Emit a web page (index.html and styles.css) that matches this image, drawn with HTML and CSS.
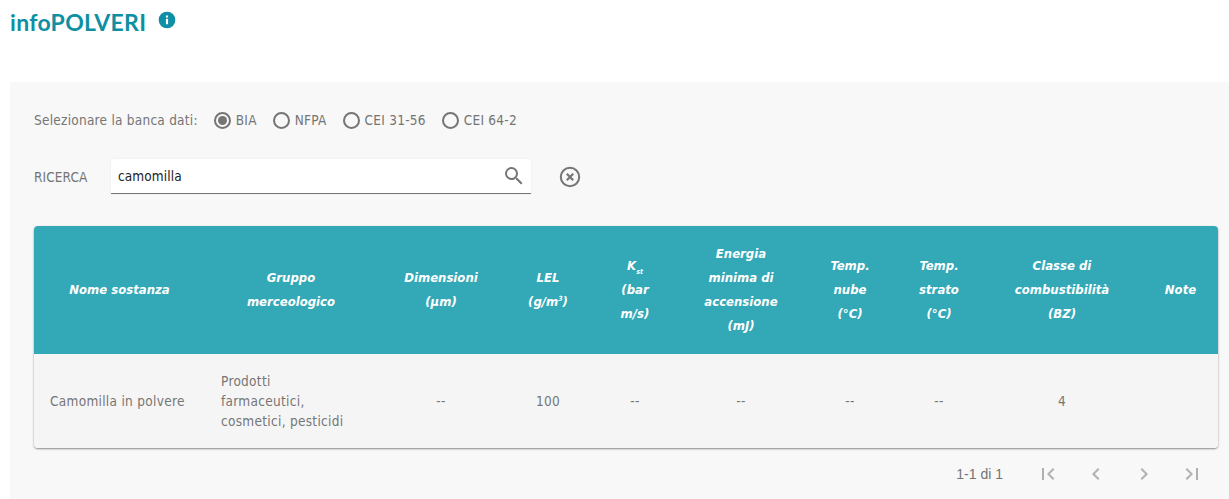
FILE: index.html
```html
<!DOCTYPE html>
<html lang="it">
<head>
<meta charset="utf-8">
<title>infoPOLVERI</title>
<link rel="stylesheet" href="styles.css">
</head>
<body>
<header class="title-bar">
  <h1 class="title">infoPOLVERI</h1>
  <svg class="info-icon" viewBox="0 0 24 24" width="20" height="20"><path fill="#0e8fa3" d="M12 2a10 10 0 1 0 0 20 10 10 0 0 0 0-20zm1.3 15h-2.6v-6.5h2.6zm0-8h-2.6V6.7h2.6z"/></svg>
</header>
<main class="panel">
  <div class="db-row">
    <span class="db-label">Selezionare la banca dati:</span>
    <label class="radio"><span class="radio-dot checked"></span>BIA</label>
    <label class="radio"><span class="radio-dot"></span>NFPA</label>
    <label class="radio"><span class="radio-dot"></span>CEI 31-56</label>
    <label class="radio"><span class="radio-dot"></span>CEI 64-2</label>
  </div>
  <div class="search-row">
    <span class="search-label">RICERCA</span>
    <div class="search-box">
      <span class="search-text">camomilla</span>
      <svg viewBox="0 0 24 24" width="24" height="24"><path fill="#757575" d="M15.5 14h-.79l-.28-.27A6.47 6.47 0 0 0 16 9.5 6.5 6.5 0 1 0 9.5 16c1.61 0 3.09-.59 4.23-1.57l.27.28v.79l5 4.99L20.49 19l-4.99-5zm-6 0C7.01 14 5 11.99 5 9.5S7.01 5 9.5 5 14 7.01 14 9.5 11.99 14 9.5 14z"/></svg>
    </div>
    <svg class="clear-icon" viewBox="0 0 24 24" width="24" height="24"><circle cx="12" cy="12" r="9.2" fill="none" stroke="#757575" stroke-width="2"/><path d="M8.8 8.8l6.4 6.4M15.2 8.8l-6.4 6.4" stroke="#757575" stroke-width="2.2" fill="none"/></svg>
  </div>
  <div class="table-card">
    <table class="data-table">
      <colgroup>
        <col class="c1"><col class="c2"><col class="c3"><col class="c4"><col class="c5"><col class="c6"><col class="c7"><col class="c8"><col class="c9"><col class="c10">
      </colgroup>
      <thead>
        <tr>
          <th>Nome sostanza</th>
          <th>Gruppo<br>merceologico</th>
          <th>Dimensioni<br>(µm)</th>
          <th>LEL<br>(g/m<sup>3</sup>)</th>
          <th>K<sub>st</sub><br>(bar<br>m/s)</th>
          <th>Energia<br>minima di<br>accensione<br>(mJ)</th>
          <th>Temp.<br>nube<br>(°C)</th>
          <th>Temp.<br>strato<br>(°C)</th>
          <th>Classe di<br>combustibilità<br>(BZ)</th>
          <th>Note</th>
        </tr>
      </thead>
      <tbody>
        <tr>
          <td class="left">Camomilla in polvere</td>
          <td class="left">Prodotti<br>farmaceutici,<br>cosmetici, pesticidi</td>
          <td>--</td>
          <td>100</td>
          <td>--</td>
          <td>--</td>
          <td>--</td>
          <td>--</td>
          <td>4</td>
          <td></td>
        </tr>
      </tbody>
    </table>
  </div>
  <nav class="pager">
    <span class="pager-text">1-1 di 1</span>
    <svg viewBox="0 0 24 24" width="24" height="24"><path fill="#b0b0b0" d="M18.41 16.59L13.82 12l4.59-4.59L17 6l-6 6 6 6zM6 6h2v12H6z"/></svg>
    <svg viewBox="0 0 24 24" width="24" height="24"><path fill="#b0b0b0" d="M15.41 7.41L14 6l-6 6 6 6 1.41-1.41L10.83 12z"/></svg>
    <svg viewBox="0 0 24 24" width="24" height="24"><path fill="#b0b0b0" d="M10 6L8.59 7.41 13.17 12l-4.58 4.59L10 18l6-6z"/></svg>
    <svg viewBox="0 0 24 24" width="24" height="24"><path fill="#b0b0b0" d="M5.59 7.41L10.18 12l-4.59 4.59L7 18l6-6-6-6zM16 6h2v12h-2z"/></svg>
  </nav>
</main>
</body>
</html>
```
FILE: styles.css
```css
* { box-sizing: border-box; }
html, body { margin: 0; padding: 0; }
body {
  width: 1229px;
  height: 499px;
  overflow: hidden;
  background: #fff;
  font-family: "DejaVu Sans", Verdana, sans-serif;
  font-stretch: condensed;
  color: #757575;
}
.title-bar {
  height: 82px;
  padding: 8px 0 0 10px;
  display: flex;
  align-items: flex-start;
  gap: 11px;
}
.title {
  margin: 0;
  font-family: Lato, sans-serif;
  font-size: 23px;
  line-height: 28px;
  font-weight: 700;
  letter-spacing: 0.3px;
  color: #0e8fa3;
}
.info-icon { margin-top: 2px; }
.panel {
  margin-left: 10px;
  height: 417px;
  background: #f8f8f8;
  padding: 28px 11px 0 24px;
}
.db-row {
  display: flex;
  align-items: center;
  height: 20px;
  font-size: 13.5px;
  letter-spacing: 0.25px;
}
.db-label { margin-right: 16px; }
.radio {
  display: flex;
  align-items: center;
  gap: 5px;
  margin-right: 16px;
}
.radio-dot {
  width: 17px;
  height: 17px;
  border: 2px solid #757575;
  border-radius: 50%;
  display: flex;
  align-items: center;
  justify-content: center;
}
.radio-dot.checked::after {
  content: "";
  width: 9px;
  height: 9px;
  border-radius: 50%;
  background: #757575;
}
.search-row {
  display: flex;
  align-items: center;
  margin-top: 29px;
  font-size: 13.5px;
}
.search-label { width: 77px; letter-spacing: 0.1px; }
.search-box {
  width: 420px;
  height: 35px;
  background: #fff;
  border-bottom: 1px solid #757575;
  border-radius: 3px 3px 0 0;
  display: flex;
  align-items: center;
  justify-content: space-between;
  padding: 0 5px 0 7px;
  box-shadow: 0 0 2px rgba(0,0,0,0.08);
}
.search-text { color: #222; font-size: 13.5px; letter-spacing: 0.1px; }
.clear-icon { margin-left: 27px; }
.table-card {
  margin-top: 32px;
  width: 1184px;
  border-radius: 4px;
  overflow: hidden;
  box-shadow: 0 1px 2px rgba(0,0,0,0.45);
}
.data-table {
  width: 1184px;
  table-layout: fixed;
  border-collapse: collapse;
  background: #f5f5f5;
}
.c1 { width: 171px; } .c2 { width: 172px; } .c3 { width: 128px; }
.c4 { width: 86px; } .c5 { width: 88px; } .c6 { width: 124px; }
.c7 { width: 94px; } .c8 { width: 84px; } .c9 { width: 162px; } .c10 { width: 75px; }
.data-table th {
  height: 128px;
  padding: 0;
  background: #33a8b6;
  color: #fff;
  font-size: 13px;
  font-style: italic;
  font-weight: 700;
  line-height: 24px;
  text-align: center;
  vertical-align: middle;
}
.data-table sup, .data-table sub { font-size: 7px; line-height: 0; }
.data-table td {
  height: 94px;
  padding: 0 16px;
  font-size: 13.5px;
  line-height: 20px;
  letter-spacing: 0.3px;
  text-align: center;
  vertical-align: middle;
}
.data-table td.left { text-align: left; white-space: nowrap; }
.pager {
  display: flex;
  align-items: center;
  justify-content: flex-end;
  gap: 24px;
  width: 1184px;
  margin-top: 14px;
  padding-right: 14px;
}
.pager-text {
  font-family: "Liberation Sans", Arial, sans-serif;
  font-size: 14px;
  margin-right: 9px;
}
```
